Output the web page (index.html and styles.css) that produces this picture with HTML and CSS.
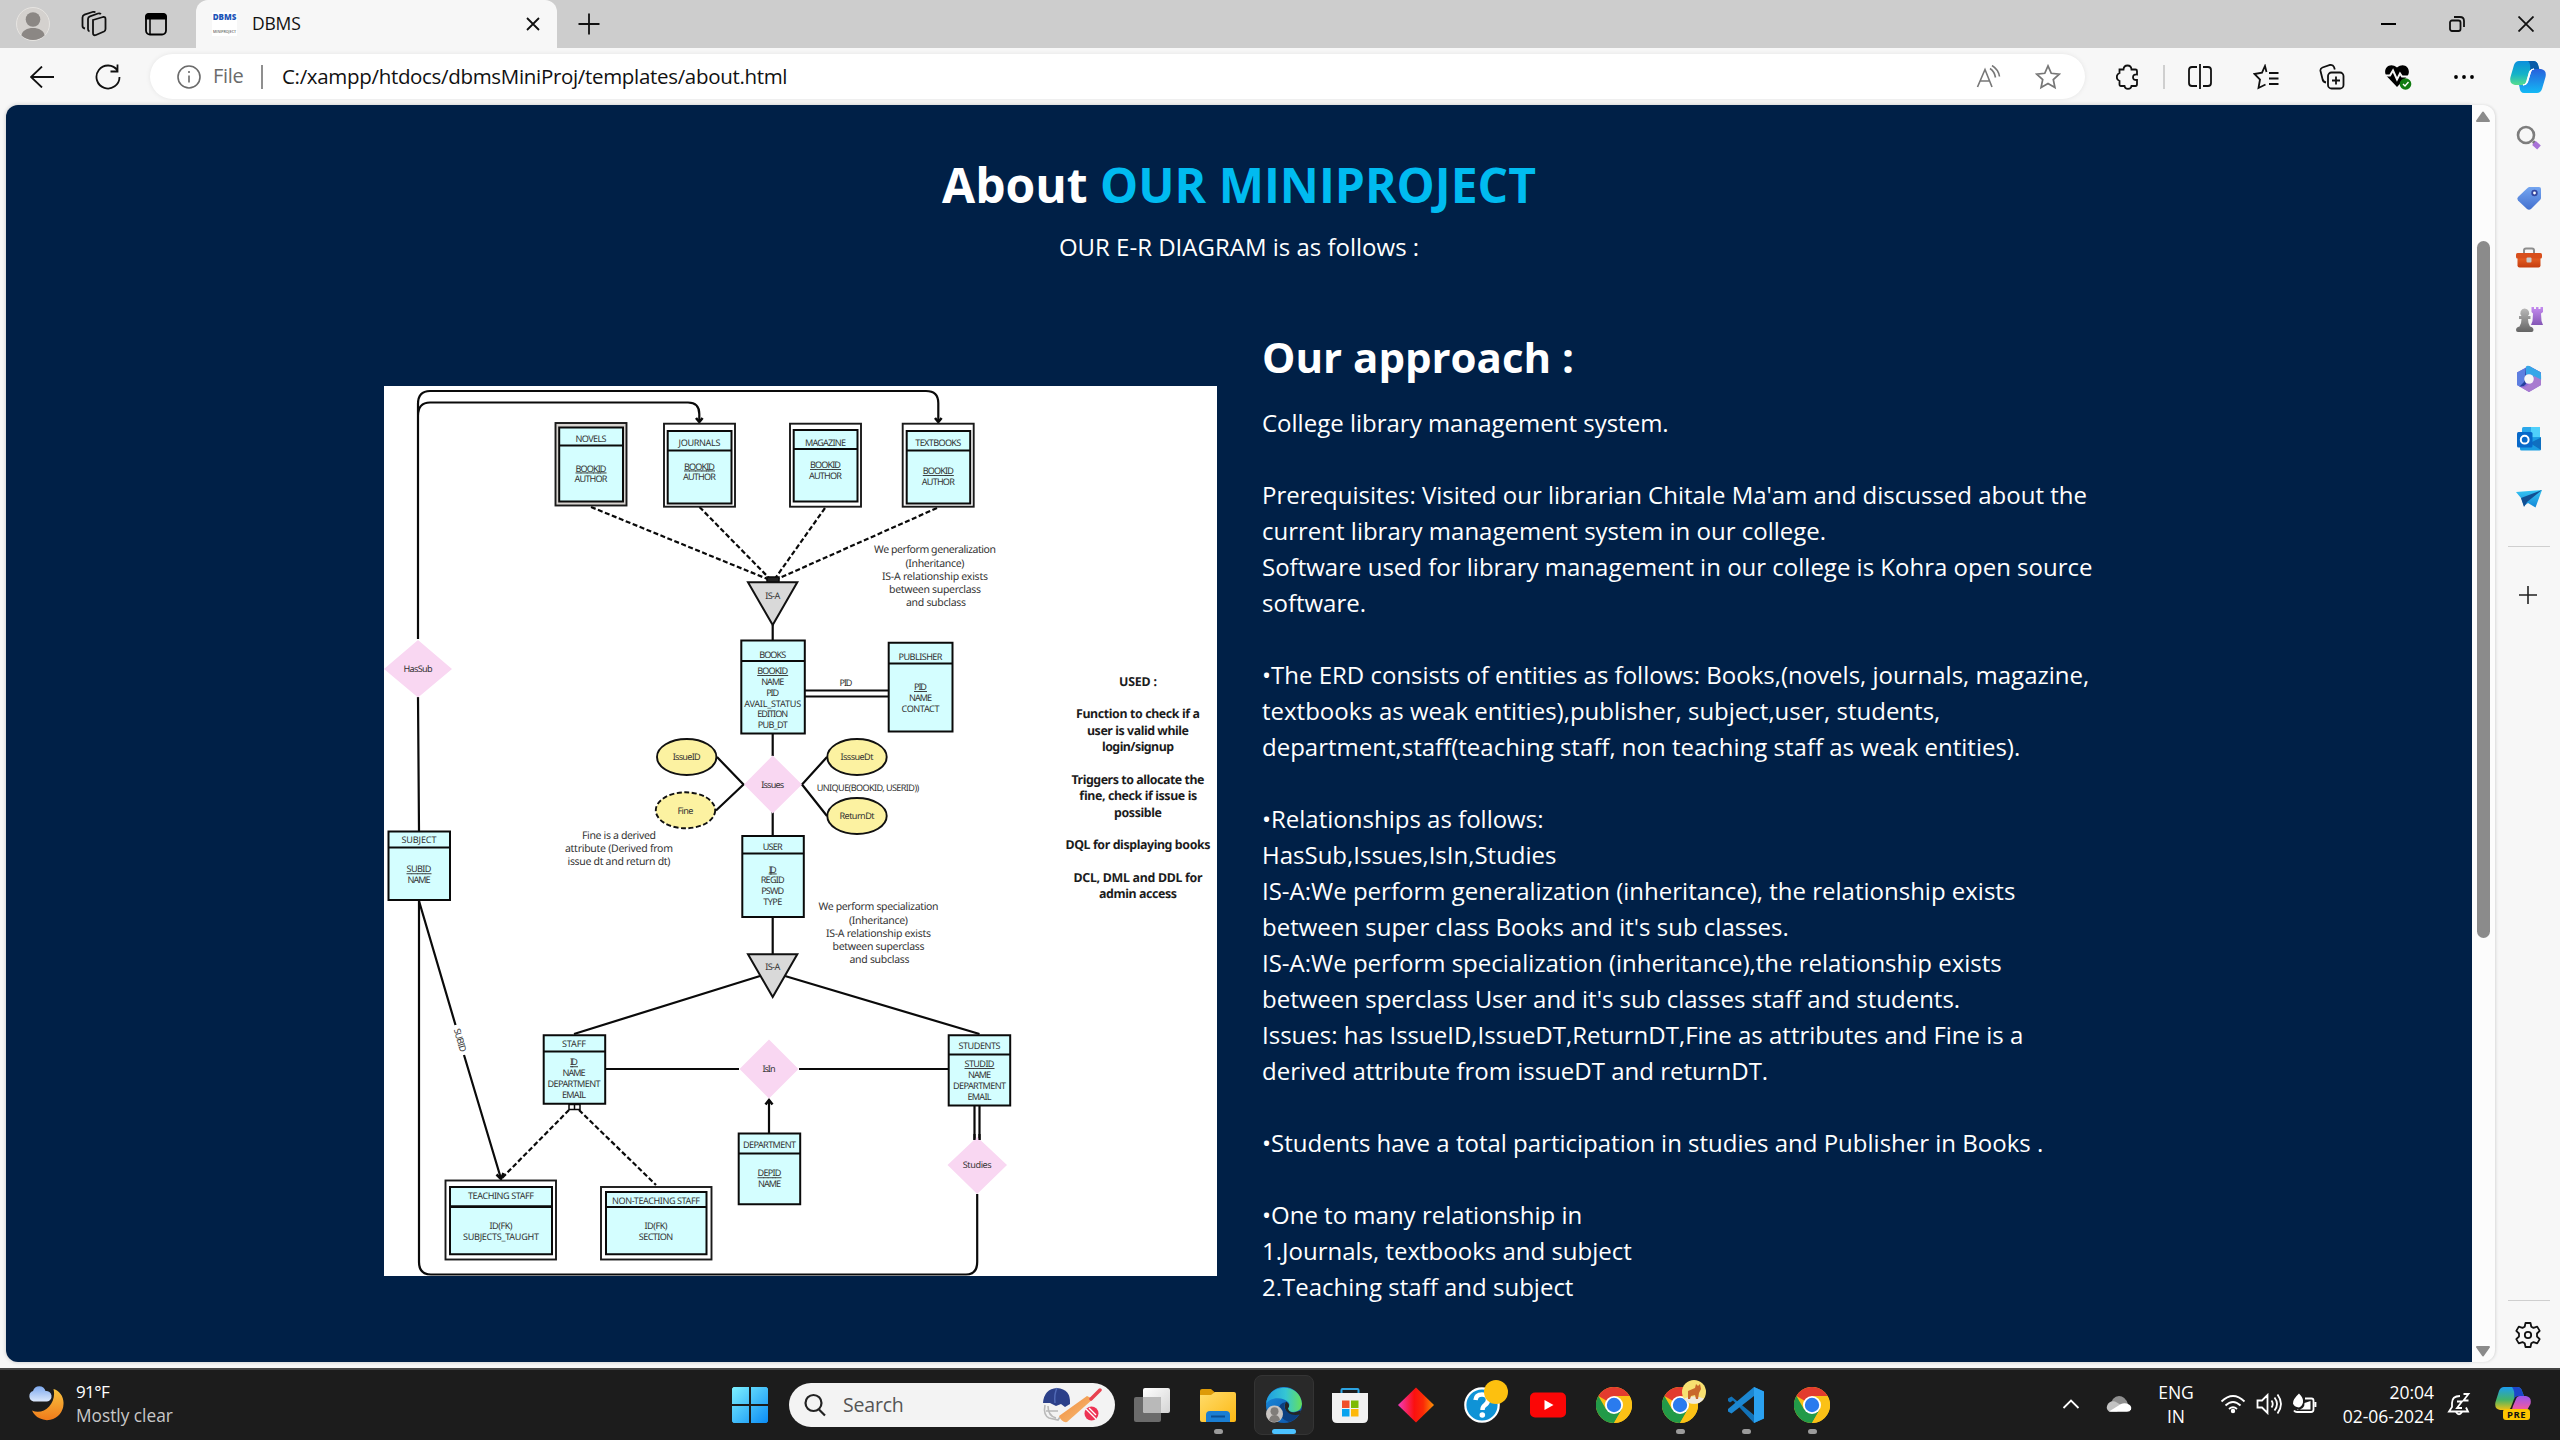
FILE: index.html
```html
<!DOCTYPE html>
<html lang="en">
<head>
<meta charset="utf-8">
<title>DBMS</title>
<link rel="stylesheet" href="styles.css">
</head>
<body>
<svg class="defs" width="0" height="0" aria-hidden="true">
  <defs>
    <linearGradient id="gWin" x1="0" y1="0" x2="1" y2="1"><stop offset="0" stop-color="#7df1ff"/><stop offset="1" stop-color="#0a8cf5"/></linearGradient>
    <linearGradient id="gMoon" x1="0" y1="0" x2="0" y2="1"><stop offset="0" stop-color="#f9c440"/><stop offset="1" stop-color="#f07a1a"/></linearGradient>
    <linearGradient id="gCloud" x1="0" y1="0" x2="0" y2="1"><stop offset="0" stop-color="#7ea9ee"/><stop offset="1" stop-color="#dce8fb"/></linearGradient>
    <linearGradient id="gTag" x1="0" y1="0" x2="0" y2="1"><stop offset="0" stop-color="#74a5f0"/><stop offset="1" stop-color="#4370cf"/></linearGradient>
    <linearGradient id="gBox" x1="0" y1="0" x2="0" y2="1"><stop offset="0" stop-color="#ee6a2c"/><stop offset="1" stop-color="#c53d0e"/></linearGradient>
    <linearGradient id="gGrey" x1="0" y1="0" x2="0" y2="1"><stop offset="0" stop-color="#b9b9b9"/><stop offset="1" stop-color="#646464"/></linearGradient>
    <linearGradient id="gPurple" x1="0" y1="0" x2="0" y2="1"><stop offset="0" stop-color="#c58bf0"/><stop offset="1" stop-color="#8457b5"/></linearGradient>
    <linearGradient id="gCopA" x1="0" y1="0" x2="0" y2="1"><stop offset="0" stop-color="#0b8fdc"/><stop offset=".55" stop-color="#14b3c8"/><stop offset="1" stop-color="#57dd8e"/></linearGradient>
    <linearGradient id="gCopB" x1="0" y1="1" x2="0" y2="0"><stop offset="0" stop-color="#13b9f5"/><stop offset="1" stop-color="#2760dc"/></linearGradient>
    <linearGradient id="gCopC" x1="0" y1="0" x2="0" y2="1"><stop offset="0" stop-color="#1c9df0"/><stop offset=".55" stop-color="#43b36a"/><stop offset="1" stop-color="#f0c114"/></linearGradient>
    <linearGradient id="gCopD" x1="0" y1="1" x2="0" y2="0"><stop offset="0" stop-color="#ff6a4d"/><stop offset=".5" stop-color="#e75aa8"/><stop offset="1" stop-color="#9a55ee"/></linearGradient>
    <linearGradient id="gFolder" x1="0" y1="0" x2="1" y2="1"><stop offset="0" stop-color="#ffdc6b"/><stop offset="1" stop-color="#fcb813"/></linearGradient>
    <linearGradient id="gDiamond" x1="0" y1="0" x2="1" y2="0"><stop offset="0" stop-color="#f23bbd"/><stop offset=".45" stop-color="#fb1010"/><stop offset=".7" stop-color="#fb2a06"/><stop offset="1" stop-color="#fb9205"/></linearGradient>
    <linearGradient id="gEdgeA" x1="0" y1=".5" x2="1" y2=".5"><stop offset="0" stop-color="#1f9ce0"/><stop offset=".55" stop-color="#35c6d4"/><stop offset="1" stop-color="#66e05a"/></linearGradient>
    <linearGradient id="gEdgeB" x1="0" y1="0" x2="1" y2="1"><stop offset="0" stop-color="#1b8fe0"/><stop offset="1" stop-color="#0b4fa5"/></linearGradient>
    <linearGradient id="gTele" x1="0" y1="0" x2="0" y2="1"><stop offset="0" stop-color="#35c5f4"/><stop offset="1" stop-color="#1487d6"/></linearGradient>
    <linearGradient id="gView" x1="0" y1="0" x2="1" y2="1"><stop offset="0" stop-color="#ffffff"/><stop offset="1" stop-color="#d4d4d4"/></linearGradient>
    <linearGradient id="gBat" x1="0" y1="0" x2="1" y2="1"><stop offset="0" stop-color="#f08a3a"/><stop offset="1" stop-color="#f8c07a"/></linearGradient>
  </defs>
  <symbol id="chrome" viewBox="0 0 36 36">
    <circle cx="18" cy="18" r="18" fill="#fbc116"/>
    <path d="M18 18 10.2 13.500 2.400 9A18 18 0 0 1 33.600 9Z" fill="#e33b2e"/>
    <path d="M2.400 9 10.200 22.500 18 27l0 9A18 18 0 0 1 2.400 9Z" fill="#229a48"/>
    <path d="M18 36 25.800 22.500 18 18 10.200 22.500Z" fill="#229a48"/>
    <path d="M18 36 25.800 22.500 18 9H33.600A18 18 0 0 1 18 36Z" fill="#fbc116"/>
    <circle cx="18" cy="18" r="9" fill="#fff"/><circle cx="18" cy="18" r="7.200" fill="#2a7bee"/>
  </symbol>
  <symbol id="star" viewBox="0 0 24 24"><path d="M12 1.800 15 8.600l7.400.8-5.500 5 1.500 7.300L12 18l-6.400 3.700 1.500-7.300-5.500-5L9 8.600Z"/></symbol>
</svg>

<header class="tabstrip">
  <div class="slot"><svg width="34" height="34" viewBox="0 0 34 34"><circle cx="17" cy="17" r="16.500" fill="#d4d1ce" stroke="#e6e4e1"/><circle cx="17" cy="12.500" r="7.300" fill="#8b8784"/><path d="M5.500 28.500C6 18.500 28 18.500 28.500 28.500A17 17 0 0 1 5.500 28.500Z" fill="#8b8784"/></svg></div>
  <div class="slot"><svg class="line" width="26" height="26" viewBox="0 0 26 26"><path d="M12 9l10-3q2.500-.5 2.500 2v10q0 1.800-1.500 2.500l-8 3.500q-3 1-3-2z"/><path d="M8.500 20.500Q7 20 7 18V8q0-2 2-2.700L17 2.500q2-.6 2.800.8M4 17.500Q1.500 17 1.500 15V6.500q0-2 2-2.800L11.500 1q2-.6 2.800.6"/></svg></div>
  <div class="slot"><svg width="24" height="24" viewBox="0 0 24 24"><rect x="2" y="2" width="20" height="20.500" rx="4" fill="none" stroke="#000" stroke-width="1.800"/><path d="M1 7.500V5q0-4 4-4h14q4 0 4 4v2.500z"/><path d="M6 7v15" stroke="#000" stroke-width="1.500"/></svg></div>
  <div class="tab">
    <div class="favicon"><b>DBMS</b><span>MINIPROJECT</span></div>
    <span class="tab-title">DBMS</span>
    <svg class="line close" width="14" height="14" viewBox="0 0 14 14"><path d="M1 1l12 12M13 1L1 13"/></svg>
  </div>
  <svg class="line newtab" width="22" height="22" viewBox="0 0 22 22"><path d="M11 .5v21M.5 11h21"/></svg>
  <div class="winctl">
    <div><svg width="16" height="16" viewBox="0 0 16 16"><path d="M0 8h15" stroke="#000" stroke-width="2"/></svg></div>
    <div><svg class="line" width="16" height="16" viewBox="0 0 16 16"><rect x="1" y="4.500" width="10.500" height="10.500" rx="2"/><path d="M5 1h6q4 0 4 4v6"/></svg></div>
    <div><svg class="line" width="16" height="16" viewBox="0 0 16 16"><path d="M.5.500l15 15M15.500.500l-15 15"/></svg></div>
  </div>
</header>

<div class="toolbar">
  <div class="nav">
    <svg class="line" width="24" height="22" viewBox="0 0 24 22"><path d="M12 .5 1 11l11 10.500M1 11h23"/></svg>
    <svg class="line" width="26" height="26" viewBox="0 0 26 26"><path d="M22.500 6.500A11.500 11.500 0 1 0 24.500 13M22.500.5v7h-7"/></svg>
  </div>
  <div class="address">
    <svg class="info" width="24" height="24" viewBox="0 0 24 24"><circle cx="12" cy="12" r="11"/><path d="M12 10.500v7M12 6v2"/></svg>
    <span class="scheme">File</span><i class="bar"></i><span class="url">C:/xampp/htdocs/dbmsMiniProj/templates/about.html</span>
    <svg class="grey read" width="26" height="24" viewBox="0 0 26 24"><path d="M1.500 22 9 4.500 16 22M4 16h10M14 3.500q4.500 3 5.500 9M16 .5q6.500 4 7.500 11"/></svg>
    <svg class="grey fav" width="26" height="26"><use href="#star"/></svg>
  </div>
  <div class="tools">
    <div><svg class="line" width="24" height="26" viewBox="0 0 24 26"><path d="M3.500 5.500H7.500q.3-4 4-4t4 4H19.500q1.500 0 1.500 1.500V10.500q-4-.3-4 2.700t4 2.800v4q0 2-1.500 2H15.500q-.3 2.800-3.500 2.800t-3.500-2.800H5q-1.500 0-1.500-1.500V17Q.8 16 .8 13t2.700-4z"/></svg></div>
    <i class="bar"></i>
    <div><svg class="line" width="24" height="26" viewBox="0 0 24 26"><path d="M9 3H4Q1 3 1 6v13q0 3 3 3h5M15 3h5q3 0 3 3v13q0 3-3 3h-5M12 0v25"/></svg></div>
    <div><svg class="line" width="26" height="26" viewBox="0 0 26 26"><path d="M16 9h9.500M16 14.500h9.500M16 20h9.500M13.500 8 12 2 9 8.700 1.500 10 7 15.500 5.500 24l7-3.500"/></svg></div>
    <div><svg class="line" width="26" height="26" viewBox="0 0 26 26"><rect x="9" y="8.500" width="15.500" height="16" rx="3.500"/><path d="M17 12.500v8M13 16.500h8M7 18.500Q4 18 3.500 15L1.500 7Q1 4.500 3.500 3.500L11 1q3-.5 4 2l.8 2.500"/></svg></div>
    <div><svg width="28" height="28" viewBox="0 0 28 28"><path d="M13 24 3 13.500C-2.500 7 5-2 13 4.500 21-2 28.500 7 23 13.500Z"/><path d="M0 12.500h6l3-5 4 9 3-6 2 3h7" fill="none" stroke="#f7f7f7" stroke-width="2"/><circle cx="21.500" cy="21" r="5.800" fill="#107c10"/><path d="m19 21 2 2 3.500-4" fill="none" stroke="#fff" stroke-width="1.400"/></svg></div>
    <div><svg width="22" height="6" viewBox="0 0 22 6"><circle cx="3" cy="3" r="1.900"/><circle cx="11" cy="3" r="1.900"/><circle cx="19" cy="3" r="1.900"/></svg></div>
    <div><svg width="36" height="34" viewBox="0 0 36 34"><path d="M9 1h14q4 0 5 4l1 4h-6q-3 0-4 3l-3 10q-1 3-4 3H5q-6-1-4.500-8L4 5q1.500-4 5-4z" fill="url(#gCopA)"/><path d="M27 33H14q-4 0-4.500-6L9 25h5q3 0 4-3l3-10q1-3 4-3h6q6 1 4.500 8l-3.500 12q-1.500 4-5 4z" fill="url(#gCopB)"/><path d="M18 1h6q3.500.5 4.500 5l.8 3H24q-3 0-4 3 1-9-2-11z" fill="#0a5ca8"/><path d="M19.500 12q1-3 4.500-3h-.5q-2 0-3 3l-3 10q-1 3-4 3h-.5q3 0 4-3z" fill="#fff" stroke="#fff"/></svg></div>
  </div>
</div>

<div class="body">
  <main class="page">
    <h1>About <span>OUR MINIPROJECT</span></h1>
    <p class="sub">OUR E-R DIAGRAM is as follows :</p>
    <div class="row">
      <svg class="erd" viewBox="384 386 833 890" width="833" height="890">
        <rect x="384" y="386" width="833" height="890" fill="#fff"/>
        <g class="wire">
          <path d="M418 639V404Q418 391 430 391H926Q938.300 391 938.300 403V421M418 416Q418 402.500 430 402.500H688Q699.300 402.500 699.300 414V421M418 697 419 831M419 901V1262Q419 1274.500 431 1274.500H966Q977.200 1274.500 977.200 1262V1194"/>
          <path d="M772.700 625v15M772.700 733v23M772.700 812v24M772.700 917v37M717 757 743.500 784.500 716 810.500M827 757 802 784.500 827 816M805 690.500h84M805 696.500h84M760 976 574 1034M785 976 979.500 1034M605 1069h134M799 1069h150M974.500 1105v35M979.500 1105v35M769 1133v-32M419 901 455.500 1025M464 1055 500.500 1177"/>
          <path d="M935 418l3.300 4 3.300-4M696 418l3.300 4 3.300-4M496.500 1174.500l4.500 4.500 2.500-6M765.500 1104.500l3.500-4.500 3.500 4.500" class="head"/>
          <path d="M591 507 770 580M699.500 507 771 580M825 508 774 580M937 508 775 580M569 1110 502 1178M579 1110 656 1185" class="dash"/>
          <path d="M767 577h12v5h-12z" class="knot"/><path d="M569 1104.500h11v5h-11zM574.500 1104v6" class="knot open"/>
        </g>
        <g class="rel">
          <path d="M418 640 452 669 418 697.500 384 669ZM772.700 755.500 802 784.500 772.700 813.500 744 784.500ZM769 1039.500 798.500 1069 769 1098.500 739.500 1069ZM977.200 1137 1007 1165 977.200 1194 947.500 1165Z"/>
        </g>
        <path d="M974.500 1134v6M979.500 1134v6" class="wire"/>
        <g class="isa"><path d="M748 582.300H797.300L772.700 625Z"/><path d="M748 954.300H797.300L772.700 997Z"/></g>
        <g class="attr"><ellipse cx="686.700" cy="757" rx="29.700" ry="18"/><ellipse cx="685.500" cy="810.300" rx="29.700" ry="18" stroke-dasharray="5 2.500"/><ellipse cx="857" cy="757" rx="29.700" ry="18"/><ellipse cx="857" cy="816" rx="29.700" ry="18"/></g>
        <g class="weak">
          <rect x="555.500" y="423" width="71" height="82.500" fill="#d8d4d0"/><rect x="664" y="423.700" width="71" height="83"/><rect x="790" y="423.700" width="71" height="83"/><rect x="902.700" y="423.700" width="71" height="83"/>
          <rect x="445.500" y="1180.500" width="110.500" height="79"/><rect x="601" y="1187" width="110.500" height="72.500"/>
        </g>
        <g class="ent">
          <path d="M559.200 427.500h63.800v74h-63.800zM559.200 445.500h63.800M667.700 431h63.800v72.500h-63.800zM667.700 450.500h63.800M793.700 430h63.800v71.500h-63.800zM793.700 449h63.800M906.700 431h63.500v72.500h-63.500zM906.700 450.500h63.500"/>
          <path d="M741.300 640.500h63.500v93h-63.500zM741.300 661h63.500M888.700 642.700h63.800v88.800h-63.800zM888.700 663.500h63.800M742.300 836h61.500v81h-61.500zM742.300 853.500h61.500M388.500 831.500h61.500v68.500h-61.500zM388.500 847.500h61.500"/>
          <path d="M543.700 1035.200h61.500v68.500h-61.500zM543.700 1051.500h61.500M948.700 1035.200h61.500v70.300h-61.500zM948.700 1054.500h61.500M738.700 1133.500h61.500v70.800h-61.500zM738.700 1153.500h61.500M450 1187h102v67.300h-102zM450 1207h102M606 1192h100.500v62.300h-100.500zM606 1207h100.500"/>
          <path d="M450 1206.300h102" class="wire"/>
        </g>
        <g class="lbl">
          <text x="591" y="441.700" textLength="31">NOVELS</text><text x="591" y="471.500" textLength="31" class="key">BOOKID</text><text x="591" y="482" textLength="33">AUTHOR</text>
          <text x="699.500" y="446" textLength="42">JOURNALS</text><text x="699.500" y="469.500" textLength="31" class="key">BOOKID</text><text x="699.500" y="480" textLength="33">AUTHOR</text>
          <text x="825.500" y="445.500" textLength="41">MAGAZINE</text><text x="825.500" y="468" textLength="31" class="key">BOOKID</text><text x="825.500" y="478.500" textLength="33">AUTHOR</text>
          <text x="938.300" y="446" textLength="46">TEXTBOOKS</text><text x="938.300" y="474" textLength="31" class="key">BOOKID</text><text x="938.300" y="485" textLength="33">AUTHOR</text>
          <text x="772.700" y="598.700" textLength="15">IS-A</text><text x="772.700" y="970" textLength="15">IS-A</text>
          <text x="772.700" y="658" textLength="27">BOOKS</text><text x="772.700" y="674" textLength="31" class="key">BOOKID</text><text x="772.700" y="684.700" textLength="23">NAME</text><text x="772.700" y="695.700" textLength="13">PID</text><text x="772.700" y="706.500" textLength="57">AVAIL_STATUS</text><text x="772.700" y="717.300" textLength="31">EDITION</text><text x="772.700" y="728.300" textLength="30">PUB_DT</text>
          <text x="920.500" y="659.700" textLength="44">PUBLISHER</text><text x="920.500" y="690" textLength="13" class="key">PID</text><text x="920.500" y="701" textLength="23">NAME</text><text x="920.500" y="711.700" textLength="38">CONTACT</text>
          <text x="846" y="686" textLength="13">PID</text>
          <text x="418" y="672" textLength="29">HasSub</text><text x="772.700" y="787.700" textLength="23">Issues</text><text x="769" y="1072" textLength="13">IsIn</text><text x="977.200" y="1167.700" textLength="29">Studies</text>
          <text x="686.700" y="760" textLength="28">IssueID</text><text x="685.500" y="813.500" textLength="16">Fine</text><text x="857" y="760" textLength="33">IsssueDt</text><text x="857" y="819.300" textLength="35">ReturnDt</text>
          <text x="868" y="791" textLength="102.500">UNIQUE(BOOKID, USERID))</text>
          <text x="772.700" y="850" textLength="20">USER</text><text x="772.700" y="872.500" textLength="8" class="key">ID</text><text x="772.700" y="883.300" textLength="24">REGID</text><text x="772.700" y="894.300" textLength="23">PSWD</text><text x="772.700" y="905" textLength="19">TYPE</text>
          <text x="419" y="843" textLength="35">SUBJECT</text><text x="419" y="872.300" textLength="25" class="key">SUBID</text><text x="419" y="883" textLength="23">NAME</text>
          <text x="574" y="1047" textLength="24">STAFF</text><text x="574" y="1065.300" textLength="8" class="key">ID</text><text x="574" y="1076" textLength="23">NAME</text><text x="574" y="1087" textLength="53">DEPARTMENT</text><text x="574" y="1097.700" textLength="24">EMAIL</text>
          <text x="979.500" y="1049" textLength="42">STUDENTS</text><text x="979.500" y="1067" textLength="30" class="key">STUDID</text><text x="979.500" y="1078" textLength="23">NAME</text><text x="979.500" y="1089" textLength="53">DEPARTMENT</text><text x="979.500" y="1099.700" textLength="24">EMAIL</text>
          <text x="769.500" y="1148" textLength="53">DEPARTMENT</text><text x="769.500" y="1176.300" textLength="24" class="key">DEPID</text><text x="769.500" y="1187" textLength="23">NAME</text>
          <text x="501" y="1199.300" textLength="66">TEACHING STAFF</text><text x="501" y="1228.700" textLength="23">ID(FK)</text><text x="501" y="1239.700" textLength="76">SUBJECTS_TAUGHT</text>
          <text x="656" y="1204" textLength="88">NON-TEACHING STAFF</text><text x="656" y="1228.700" textLength="23">ID(FK)</text><text x="656" y="1239.700" textLength="34.500">SECTION</text>
          <text transform="translate(457 1041) rotate(74)" textLength="24">SUBID</text>
        </g>
        <g class="note">
          <text x="935" y="553.300" textLength="122">We perform generalization</text><text x="935" y="566.700" textLength="59">(Inheritance)</text><text x="935" y="580" textLength="106">IS-A relationship exists</text><text x="935" y="593" textLength="92">between superclass</text><text x="936" y="606.300" textLength="60">and subclass</text>
          <text x="878.500" y="910.300" textLength="120">We perform specialization</text><text x="878.500" y="923.500" textLength="59">(Inheritance)</text><text x="878.500" y="937" textLength="105">IS-A relationship exists</text><text x="878.500" y="950" textLength="92">between superclass</text><text x="879.500" y="963" textLength="60">and subclass</text>
          <text x="619" y="838.700" textLength="74">Fine is a derived</text><text x="619" y="851.700" textLength="108">attribute (Derived from</text><text x="619" y="864.700" textLength="103">issue dt and return dt)</text>
        </g>
        <g class="used">
          <text x="1138" y="685.500" textLength="38">USED :</text><text x="1138" y="718" textLength="124">Function to check if a</text><text x="1138" y="734.500" textLength="102">user is valid while</text><text x="1138" y="751" textLength="72">login/signup</text><text x="1138" y="783.700" textLength="133">Triggers to allocate the</text><text x="1138" y="800" textLength="118">fine, check if issue is</text><text x="1138" y="816.500" textLength="48">possible</text><text x="1138" y="849" textLength="145">DQL for displaying books</text><text x="1138" y="882" textLength="129">DCL, DML and DDL for</text><text x="1138" y="898.300" textLength="78">admin access</text>
        </g>
      </svg>
      <section class="approach">
        <h2>Our approach :</h2>
        <p>College library management system.<br><br>Prerequisites: Visited our librarian Chitale Ma'am and discussed about the<br>current library management system in our college.<br>Software used for library management in our college is Kohra open source<br>software.<br><br>•The ERD consists of entities as follows: Books,(novels, journals, magazine,<br>textbooks as weak entities),publisher, subject,user, students,<br>department,staff(teaching staff, non teaching staff as weak entities).<br><br>•Relationships as follows:<br>HasSub,Issues,IsIn,Studies<br>IS-A:We perform generalization (inheritance), the relationship exists<br>between super class Books and it's sub classes.<br>IS-A:We perform specialization (inheritance),the relationship exists<br>between sperclass User and it's sub classes staff and students.<br>Issues: has IssueID,IssueDT,ReturnDT,Fine as attributes and Fine is a<br>derived attribute from issueDT and returnDT.<br><br>•Students have a total participation in studies and Publisher in Books .<br><br>•One to many relationship in<br>1.Journals, textbooks and subject<br>2.Teaching staff and subject</p>
      </section>
    </div>
  </main>
  <div class="scroll">
    <svg width="16" height="12" viewBox="0 0 16 12"><path d="M8 1.500 14 10H2Z"/></svg>
    <div class="track"><div class="thumb"></div></div>
    <svg width="16" height="12" viewBox="0 0 16 12"><path d="M8 10.500 14 2H2Z"/></svg>
  </div>
  <aside class="side">
    <div class="apps">
      <div><svg width="26" height="26" viewBox="0 0 26 26"><path d="m17 16.500 3 2.500" stroke="#777" stroke-width="3"/><circle cx="10" cy="10" r="8" fill="#f7f7f7" stroke="#7d7d7d" stroke-width="2.600"/><path d="m18 18 5 4.500" stroke="#a873d8" stroke-width="5.500"/></svg></div>
      <div><svg width="26" height="26" viewBox="0 0 26 26"><path d="M13 2h10q2 0 2 2v9q0 1-1 2l-9 9q-2 1.500-4 0L2 15.500q-1.500-1.800 0-3.500L11.500 3z" fill="url(#gTag)"/><circle cx="18.500" cy="8" r="2.300" fill="#fff" stroke="#3447a0" stroke-width="1.800"/></svg></div>
      <div><svg width="28" height="26" viewBox="0 0 28 26"><path d="M9 8V5.500q0-2 2-2h6q2 0 2 2V8" fill="none" stroke="#8d8d8d" stroke-width="2"/><rect x="2.500" y="10" width="23" height="12.500" rx="2" fill="url(#gBox)"/><rect x="1" y="8" width="26" height="5.500" rx="1.500" fill="#d84f1c"/><rect x="11.500" y="12.500" width="5" height="5" rx="1" fill="#c9c9c9"/></svg></div>
      <div><svg width="28" height="28" viewBox="0 0 28 28"><path d="M16.500 2h2.500v2h2V2h2.500v2h2V2H28v5l-2 1.500.5 7.500 1.500 4H16l1.500-4 .5-7.500L16.500 7z" fill="url(#gPurple)"/><path d="M9.500 3.500a4.500 4.500 0 0 1 3.500 7.500h2.500v3H13q0 5 2 7.500 3.500.5 3.500 3.500 0 2-2 2H3q-2 0-2-2 0-3 3.500-3.500 2-2.500 2-7.500H4v-3h2.500A4.500 4.500 0 0 1 9.500 3.500z" fill="url(#gGrey)"/></svg></div>
      <div><svg width="26" height="28" viewBox="0 0 26 28"><path d="M13 1 25 7.500V20L13 27 1 20V7.500Z" fill="#8d6ad8"/><path d="M13 1 25 7.500V14l-8-3.500q-3-3-7 0L9 18 4 21.700 1 20V7.500Z" fill="#5d7fe0"/><path d="M10 1.500Q12 0 15 2l9 5q1.500 1 1 9l-7-4q-3-4-8-2z" fill="#36a7e8"/><path d="M10 1.500 9 12l-1 5-4.500 4.500Q8 22 10 19V10z" fill="#253f9c"/><path d="M25 14.500V20l-12 7-8.500-5q6 1 9-4l4-3 .5-4z" fill="#a87bd0"/><circle cx="13" cy="14" r="4.800" fill="#f7f7f7"/></svg></div>
      <div><svg width="26" height="26" viewBox="0 0 26 26"><rect x="6" y="1" width="18" height="20" rx="1.500" fill="#2aa7ea"/><path d="M15 1h9v10h-9z" fill="#4fd0fb"/><path d="M4 12l21-1v12q0 1.500-1.500 1.500h-18Q4 24.500 4 23z" fill="#1b9de2"/><path d="M14 17 25 11.500V24z" fill="#0f6fc0"/><rect x="1" y="6" width="15.500" height="15.500" rx="1.500" fill="#0869c9"/><circle cx="8.700" cy="13.700" r="3.900" fill="none" stroke="#fff" stroke-width="2"/></svg></div>
      <div><svg width="28" height="22" viewBox="0 0 28 22"><path d="M1 4 27 2l-6.500 17.500L13 15l-4 3-3-8z" fill="url(#gTele)"/><path d="M6 10 27 2 12 14l-3 5z" fill="#124f93"/></svg></div>
    </div>
    <hr>
    <svg class="add" width="20" height="20" viewBox="0 0 20 20"><path d="M10 1v18M1 10h18" stroke="#222" stroke-width="1.600"/></svg>
    <hr class="low">
    <svg class="line" width="28" height="28" viewBox="0 0 28 28"><path d="M11.500 2h5l.8 3.700 2.200 1.200 3.700-1.300 2.500 4.300L23 12.500v3l2.700 2.600-2.500 4.300-3.700-1.300-2.200 1.200-.8 3.700h-5l-.8-3.700-2.200-1.200-3.700 1.300-2.500-4.300L5 15.500v-3L2.300 9.900l2.500-4.300 3.700 1.300 2.200-1.200z" stroke-linejoin="round"/><circle cx="14" cy="14" r="3.200"/></svg>
  </aside>
</div>

<footer class="taskbar">
  <div class="weather">
    <svg width="36" height="36" viewBox="0 0 36 36"><path d="M25.500 3C32 5 36 11 35.500 18A16.500 16.500 0 0 1 4 24.500C16 30 29 17 25.500 3Z" fill="url(#gMoon)"/><path d="M5.500 15.500a5.500 5.500 0 0 1-.5-10.500A6.500 6.500 0 0 1 17.500 5 5.300 5.300 0 0 1 19 15.500z" fill="url(#gCloud)"/></svg>
    <div><b>91°F</b><span>Mostly clear</span></div>
  </div>
  <div class="dock">
    <div class="ic"><svg width="36" height="36" viewBox="0 0 36 36"><path d="M1.500 0H17V17H0V1.500zM19 0h15.500L36 1.500V17H19zM0 19h17v17H1.500L0 34.500zM19 19h17v15.500L34.500 36H19z" fill="url(#gWin)"/></svg></div>
    <div class="search">
      <svg width="24" height="24" viewBox="0 0 24 24" fill="none" stroke="#222" stroke-width="2.200"><circle cx="10.500" cy="10" r="8"/><path d="m16 16.500 6 6"/></svg>
      <span>Search</span>
      <svg class="cricket" width="60" height="36" viewBox="0 0 60 36"><path d="M3 18q-2 10 4 13l9 2 2-3M6 19q0 10 8 12M4 24h12" fill="none" stroke="#b9b9b9" stroke-width="1.600"/><path d="M1 16Q2 2 15 1q14 1 13 16l-5 3-4-3-5 2-6-3z" fill="#2c4089"/><path d="M15 1q-3 6-2 15" fill="none" stroke="#5069b5" stroke-width="1.500"/><path d="M17 29 45 9l6 3-26 23q-5 1-8-6z" fill="url(#gBat)"/><path d="M49 12 58 3" stroke="#e8414f" stroke-width="3.500" stroke-linecap="round"/><circle cx="49.500" cy="26.500" r="7" fill="#ee3354"/><path d="m44 22 10 10m-7-11 7 7" stroke="#fff" stroke-width="1.400"/></svg>
    </div>
    <div class="ic"><svg width="36" height="36" viewBox="0 0 36 36"><rect x="0" y="10" width="27" height="25" rx="2" fill="#6b6b6b"/><rect x="9" y="1" width="27" height="25" rx="2" fill="url(#gView)"/><path d="M9 10h18v16H11q-2 0-2-2z" fill="#b9b9b9"/></svg></div>
    <div class="ic dot"><svg width="36" height="36" viewBox="0 0 36 36"><path d="M0 4q0-2 2-2h9l4 3.500-3 4H0z" fill="#dd9a08"/><path d="M0 8h11l4-3h19q2 0 2 2v26q0 2-2 2H2q-2 0-2-2z" fill="url(#gFolder)"/><path d="M6 35V28q0-4 4-4h16q4 0 4 4v7z" fill="#1a7ed3"/><path d="M11 29.500h14" stroke="#0a4f93" stroke-width="2"/></svg></div>
    <div class="ic active"><svg width="36" height="36" viewBox="0 0 36 36"><circle cx="18" cy="18" r="18" fill="url(#gEdgeB)"/><path d="M0 17C2-4 34-5 36 17q-1 8-9 8-6 0-5-4 2-2 1-5C18 9 3 10 0 17Z" fill="url(#gEdgeA)"/><path d="M13 24q-1-8 7-9-3 3-1 7 4 6 12 4l3 0Q30 33 23 35 14 32 13 24Z" fill="#0c3f80"/><path d="M20 14.500q5 3 2 7 1 4 6 4l7-2-1 4q-12 2-15-6-1-4 1-7z" fill="#252525"/><circle cx="8.500" cy="27" r="8.500" fill="#c9c5c2"/><circle cx="8.500" cy="24.300" r="4" fill="#807c79"/><path d="M3 33q1-5 5.500-5t5.500 5a9 9 0 0 1-11 0z" fill="#807c79"/></svg></div>
    <div class="ic"><svg width="36" height="36" viewBox="0 0 36 36"><path d="M9.500 8V3q0-1 1-1h15q1 0 1 1v5" fill="none" stroke="#2ca3e2" stroke-width="2"/><path d="M0 6h36v25q0 5-5 5H5q-5 0-5-5z" fill="#f1f1f1"/><path d="M10 13.500h7.500V21H10z" fill="#f1502a"/><path d="M19 13.500h7.500V21H19z" fill="#7dba06"/><path d="M10 22h7.500v7.500H10z" fill="#08a3ee"/><path d="M19 22h7.500v7.500H19z" fill="#fdb80a"/></svg></div>
    <div class="ic"><svg width="36" height="36" viewBox="0 0 36 36"><path d="M18 .5 36 18 18 35.500 0 18Z" fill="url(#gDiamond)"/></svg></div>
    <div class="ic"><svg width="52" height="52" viewBox="-8 -8 52 52"><circle cx="18" cy="18" r="16.700" fill="#0f93d6" stroke="#fff" stroke-width="2.200"/><path d="M11.500 13Q12 7.500 18 7.500t6 5.500q0 3-3.500 5.500-2 1.500-2 4.500" fill="none" stroke="#fff" stroke-width="4.500"/><circle cx="18.300" cy="28" r="2.800" fill="#fff"/><circle cx="32" cy="5" r="12" fill="#fdc00f"/></svg></div>
    <div class="ic"><svg width="36" height="36" viewBox="0 0 36 36"><rect y="5.500" width="36" height="25" rx="5" fill="#fb0606"/><path d="m14.500 13 9 5-9 5z" fill="#fff"/></svg></div>
    <div class="ic"><svg width="36" height="36"><use href="#chrome"/></svg></div>
    <div class="ic dot"><svg width="36" height="36"><use href="#chrome"/></svg><svg class="pet" width="24" height="24" viewBox="0 0 24 24"><circle cx="12" cy="12" r="12" fill="#f7e071"/><path d="M2 18.500q10-4 20 0A12 12 0 0 1 2 18.500z" fill="#efe9dc"/><path d="m6 11 7-3 1-4 2 2 2-2 1 5-2 4-1 6h-2l-1-4-4 1-1 3H6z" fill="#c8672c"/></svg></div>
    <div class="ic dot"><svg width="36" height="36" viewBox="0 0 36 36"><path d="M26 0 36 4.500v27L26 36 5 13.500 2 15.500 0 14v-2.500L3.500 9.500 26 28z" fill="#1272b8"/><path d="M26 9 3.500 26.500 0 24.500V22L26 0z" fill="#1c87d2"/><path d="M26 0 36 4.500v27L26 36z" fill="#2ba1f0"/></svg></div>
    <div class="ic dot"><svg width="36" height="36"><use href="#chrome"/></svg></div>
  </div>
  <div class="tray">
    <svg class="w caret" width="18" height="10" viewBox="0 0 18 10"><path d="m1.500 9 7.500-7.500L16.500 9"/></svg>
    <svg class="cloud" width="26" height="18" viewBox="0 0 26 18"><path d="M4 12Q6 1 13 1q6 0 9 8z" fill="#8f8f8f"/><path d="M3 16.500Q0 14 1 11 3 5.500 9 6.500l9 5-7 5z" fill="#c2c2c2"/><path d="M3 16.500 15 9q4-1.500 8 .5 3 2 2 5-1 2.200-4 2.200H5z" fill="#fff"/></svg>
    <div class="lang"><span>ENG</span><span>IN</span></div>
    <svg class="w wifi" width="26" height="20" viewBox="0 0 26 20"><path d="M1.500 7.500q11.500-11 23 0M5.500 11.500q7.500-7 15 0M9 15q4-3.500 8 0"/><circle cx="13" cy="17" r="1.300" fill="#fff"/></svg>
    <svg class="w vol" width="26" height="22" viewBox="0 0 26 22"><path d="M1.500 7.500H6l5.500-5.500v18L6 14.500H1.500zM15.500 7.500q2.500 3.500 0 7M18.500 4.500q5 6.500 0 13M21.500 1.500q7 9.500 0 19"/></svg>
    <svg class="w batt" width="26" height="22" viewBox="0 0 26 22"><path d="M13 5.500h6.500q2 0 2 2v9q0 2.500-2.500 2.500H5q-2 0-3-1.500M23.500 9v5"/><path d="M7 .5q5 5 4 9-1 4-4 5-5-.5-6-4-.5-4 6-10zM5 17q8-1 7.500-7l6-2v8.500H5z" fill="#fff" stroke="none"/></svg>
    <div class="clock"><span>20:04</span><span>02-06-2024</span></div>
    <svg class="w bell" width="24" height="24" viewBox="0 0 24 24"><path d="M13 4Q5 4 5 11v4l-3 4.500h19l-2-4M9 20q3 4.500 6 0"/><path d="M10 9.500h5l-5 6.500h5M16.500 2h5l-5 6.500h5"/></svg>
    <div class="copilot"><svg width="36" height="36" viewBox="0 0 36 36"><path d="M9 1h13q4 0 5 4l2 5h-6q-3 0-4 3l-3 8q-1 3-4 3H5q-6-1-4.500-8L4 5q1.500-4 5-4z" fill="url(#gCopC)"/><path d="M27 33H14l4-13 3-7q1-3 4-3h6q6 1 4.500 8z" fill="url(#gCopD)"/><path d="M17 1h5q4 0 5 4l2 5h-6q-3 0-4 3 1-9-2-12z" fill="#1c45c9"/></svg><b>PRE</b></div>
  </div>
</footer>
</body>
</html>
```

FILE: styles.css
```css
* { box-sizing: border-box; }
body {
  margin: 0;
  width: 2560px;
  height: 1440px;
  overflow: hidden;
  display: flex;
  flex-direction: column;
  background: #f7f7f7;
  font-family: "Open Sans", "Noto Sans", sans-serif;
}
svg { display: block; flex: none; }
.defs { position: absolute; }
.line { fill: none; stroke: #111; stroke-width: 1.8; }
.grey { fill: none; stroke: #777; stroke-width: 1.6; }

/* tab strip */
.tabstrip {
  height: 48px;
  flex: none;
  display: flex;
  align-items: center;
  background: #cdcdcd;
  padding-left: 2px;
}
.slot { width: 61.5px; display: flex; justify-content: center; }
.tab {
  width: 361px;
  height: 48px;
  margin-left: 9.5px;
  padding: 0 17px 0 16px;
  display: flex;
  align-items: center;
  background: #f7f7f7;
  border-radius: 12px 12px 0 0;
}
.favicon {
  width: 25px;
  height: 24px;
  background: #fff;
  display: flex;
  flex-direction: column;
  align-items: center;
  justify-content: space-between;
  line-height: 10px;
}
.favicon b { font: 800 8px/10px "Open Sans", sans-serif; color: #1d55b8; }
.favicon span { font: 600 3.6px/9px "Open Sans", sans-serif; color: #666; }
.tab-title { margin-left: 15px; padding-bottom: 2px; font-size: 17.5px; letter-spacing: -0.2px; color: #111; }
.close { margin-left: auto; }
.newtab { margin-left: 21px; }
.winctl { margin-left: auto; display: flex; }
.winctl div { width: 68.5px; display: flex; justify-content: center; }

/* toolbar */
.toolbar { height: 57px; flex: none; display: flex; align-items: center; }
.nav { width: 150px; display: flex; gap: 41px; padding-left: 30px; align-items: center; }
.address {
  width: 1935px;
  height: 45px;
  border-radius: 23px;
  background: #fff;
  box-shadow: 0 0 5px rgba(0, 0, 0, .08);
  display: flex;
  align-items: center;
  padding-left: 27px;
  color: #111;
}
.info { fill: none; stroke: #6b6b6b; stroke-width: 1.6; }
.bar { width: 2px; height: 24px; background: #cfcfcf; }
.address .bar { background: #8f8f8f; margin-left: 17px; }
.scheme { width: 31px; margin-left: 12px; padding-bottom: 2px; color: #6b6b6b; letter-spacing: -.3px; font-size: 20px; }
.url { margin-left: 19px; padding-bottom: 2px; font-size: 20.5px; letter-spacing: -.32px; white-space: nowrap; }
.read { margin-left: auto; margin-right: 33px; }
.fav { margin-right: 24px; }
.tools { display: flex; align-items: center; flex: 1; padding-left: 10px; }
.tools div { width: 66px; display: flex; justify-content: center; }
.tools .bar { margin: 0 2px; }
.tools div:last-child { width: 62px; }

/* content area */
.body { height: 1263px; flex: none; display: flex; padding: 0 0 6px 6px; }
.page {
  width: 2466px;
  background: #002047;
  border-radius: 12px 0 0 12px;
  box-shadow: 0 0 4px rgba(0, 0, 0, .2);
  padding-top: 51px;
  color: #fff;
  text-align: center;
}
h1 { margin: 0; font-size: 48px; line-height: 58px; font-weight: 700; }
h1 span { color: #00bbf0; }
.sub { margin: 15px 0 0; font-size: 24px; line-height: 36px; }
.row { display: flex; gap: 45px; padding-left: 378px; margin-top: 67px; }
.erd { margin-top: 54px; }
.approach { text-align: left; white-space: nowrap; }
h2 { margin: 0 0 23px; font-size: 42px; line-height: 50px; font-weight: 700; }
.approach p { margin: 0; font-size: 24px; line-height: 36px; }

/* entity-relationship diagram */
.erd text { text-anchor: middle; font-family: "Noto Sans", sans-serif; text-rendering: geometricPrecision; }
.wire { fill: none; stroke: #0a0a0a; stroke-width: 2.2; }
.head { stroke-width: 2.6; }
.dash { stroke-dasharray: 5 2.5; }
.knot { fill: #222; stroke-width: 1.5; }
.open { fill: #fff; }
.rel { fill: #f9d7f2; }
.isa { fill: #d9d9d9; stroke: #111; stroke-width: 2; }
.attr { fill: #fcf2a1; stroke: #111; stroke-width: 1.9; }
.weak { fill: #fff; stroke: #1a1a1a; stroke-width: 1.9; }
.ent { fill: #d4feff; stroke: #0a0a0a; stroke-width: 2; }
.lbl { font-size: 9.1px; fill: #333; }
.key { text-decoration: underline; }
.note { font-size: 10.5px; fill: #333; }
.used { font-size: 12.4px; font-weight: 700; fill: #1c1c1c; }

/* page scrollbar */
.scroll {
  width: 23px;
  background: #fcfcfc;
  border-radius: 0 12px 12px 0;
  box-shadow: 1px 0 3px rgba(0, 0, 0, .12);
  display: flex;
  flex-direction: column;
  align-items: center;
  padding: 6px 1px 5px 0;
  fill: #8b8b8b;
}
.scroll svg { stroke: #8b8b8b; stroke-width: 2; stroke-linejoin: round; }
.track { flex: 1; padding-top: 118px; }
.thumb { width: 13px; height: 697px; border-radius: 7px; background: #8b8b8b; }

/* browser sidebar */
.side { width: 65px; display: flex; flex-direction: column; align-items: center; padding-top: 3px; }
.apps div { height: 60.2px; display: flex; align-items: center; justify-content: center; }
.apps { margin-left: 2px; }
.side hr { width: 42px; height: 0; margin: 17px 0 0 2px; border: 0; border-top: 1px solid #cfcfcf; }
.add { margin-top: 38px; }
.side .low { margin: auto 0 20px 2px; }
.side > .line { margin-bottom: 13px; }

/* taskbar */
.taskbar {
  height: 72px;
  flex: none;
  display: flex;
  align-items: center;
  background: #1c1c1c;
  border-top: 2px solid #444;
  color: #fff;
}
.weather { width: 717px; height: 70px; padding: 0 0 2px 28px; display: flex; gap: 12px; align-items: center; }
.weather div, .lang, .clock { display: flex; flex-direction: column; line-height: 24px; }
.weather b { font-weight: 400; font-size: 17px; letter-spacing: -.6px; }
.weather span { color: #c8c8c8; font-size: 17.3px; }
.dock { display: flex; align-items: center; height: 60px; }
.ic { width: 66px; height: 60px; display: flex; align-items: center; justify-content: center; position: relative; }
.ic.dot::after {
  content: "";
  position: absolute;
  left: 29px;
  bottom: 1px;
  width: 9px;
  height: 5px;
  border-radius: 3px;
  background: #9b9b9b;
}
.ic.active { width: 60px; margin: 0 3px; background: #292929; border: 1px solid #343434; border-radius: 8px; }
.ic.active::after {
  content: "";
  position: absolute;
  left: 17px;
  bottom: 0;
  width: 24px;
  height: 5px;
  border-radius: 3px;
  background: #4cc2ff;
}
.pet { position: absolute; left: 35px; top: 5px; }
.search {
  width: 326px;
  height: 44px;
  margin: 0 4px 0 6px;
  border-radius: 22px;
  background: #f3f3f3;
  display: flex;
  align-items: center;
  padding: 0 13px 0 14px;
  color: #555;
  font-size: 19.5px;
}
.search span { margin-left: 16px; padding-bottom: 2px; letter-spacing: -.2px; }
.cricket { margin-left: auto; }
.tray { margin-left: auto; display: flex; align-items: center; height: 70px; padding-bottom: 2px; font-size: 17.5px; }
.w { fill: none; stroke: #fff; stroke-width: 1.8; }
.cloud { margin-left: 26px; }
.lang { width: 60px; margin-left: 14px; align-items: center; }
.wifi { margin-left: 14px; }
.vol { margin-left: 10px; }
.batt { margin-left: 10px; }
.clock { width: 105px; margin-left: 11px; align-items: flex-end; white-space: nowrap; }
.bell { margin-left: 13px; }
.copilot { position: relative; margin: 0 29px 0 24px; }
.copilot b {
  position: absolute;
  left: 8px;
  top: 23px;
  width: 27px;
  height: 11px;
  border-radius: 3px;
  background: #fdc500;
  color: #111;
  font-size: 9.5px;
  line-height: 11px;
  text-align: center;
  letter-spacing: .5px;
}
```
